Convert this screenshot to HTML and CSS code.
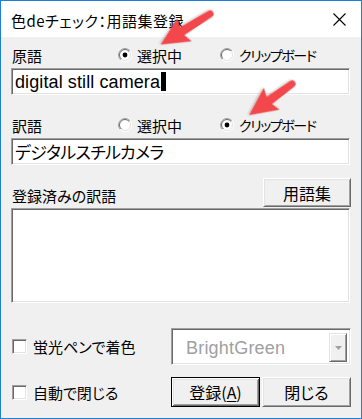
FILE: index.html
```html
<!DOCTYPE html>
<html lang="ja">
<head>
<meta charset="utf-8">
<title>色deチェック：用語集登録</title>
<link rel="stylesheet" href="styles.css">
</head>
<body>
<div class="window">
  <div class="titlebar">
    <span class="title">色deチェック：用語集登録</span>
    <svg class="close" width="13" height="13" viewBox="0 0 13 13"><path d="M0.5 0.5 L12.5 12.5 M12.5 0.5 L0.5 12.5" stroke="#000" stroke-width="1.1" fill="none"/></svg>
  </div>
  <div class="content">
    <div class="radio-row">
      <span class="label">原語</span>
      <span class="radio">
        <svg class="rb" width="14" height="14" viewBox="0 0 14 14"><defs><linearGradient id="go" x1="0" y1="0" x2="1" y2="1"><stop offset="0.5" stop-color="#a0a0a0"/><stop offset="0.5" stop-color="#ffffff"/></linearGradient><linearGradient id="gi" x1="0" y1="0" x2="1" y2="1"><stop offset="0.5" stop-color="#696969"/><stop offset="0.5" stop-color="#e3e3e3"/></linearGradient></defs><circle cx="7" cy="7" r="6.5" fill="none" stroke="url(#go)"/><circle cx="7" cy="7" r="5.5" fill="#fff" stroke="url(#gi)"/><circle cx="7" cy="7" r="2.4" fill="#000"/></svg>
        <span>選択中</span>
      </span>
      <span class="radio">
        <svg class="rb" width="14" height="14" viewBox="0 0 14 14"><circle cx="7" cy="7" r="6.5" fill="none" stroke="url(#go)"/><circle cx="7" cy="7" r="5.5" fill="#fff" stroke="url(#gi)"/></svg>
        <span class="narrow">クリップボード</span>
      </span>
    </div>
    <div class="textbox latin"><span>digital still camera</span><span class="caret"></span></div>

    <div class="radio-row row2">
      <span class="label">訳語</span>
      <span class="radio">
        <svg class="rb" width="14" height="14" viewBox="0 0 14 14"><circle cx="7" cy="7" r="6.5" fill="none" stroke="url(#go)"/><circle cx="7" cy="7" r="5.5" fill="#fff" stroke="url(#gi)"/></svg>
        <span>選択中</span>
      </span>
      <span class="radio">
        <svg class="rb" width="14" height="14" viewBox="0 0 14 14"><circle cx="7" cy="7" r="6.5" fill="none" stroke="url(#go)"/><circle cx="7" cy="7" r="5.5" fill="#fff" stroke="url(#gi)"/><circle cx="7" cy="7" r="2.4" fill="#000"/></svg>
        <span class="narrow">クリップボード</span>
      </span>
    </div>
    <div class="textbox jp">デジタルスチルカメラ</div>

    <div class="list-head">
      <span class="list-label">登録済みの訳語</span>
      <span class="btn glossary">用語集</span>
    </div>
    <div class="listbox"></div>

    <div class="opt-row row-a">
      <span class="check"><span class="box"></span><span>蛍光ペンで着色</span></span>
      <div class="combo">
        <span class="combo-text">BrightGreen</span>
        <span class="drop"><svg width="7" height="4" viewBox="0 0 7 4"><path d="M0 0 H7 L3.5 4 Z" fill="#a0a0a0"/></svg></span>
      </div>
    </div>
    <div class="opt-row row-b">
      <span class="check"><span class="box"></span><span>自動で閉じる</span></span>
      <div class="buttons">
        <span class="btn default">登録(<u>A</u>)</span>
        <span class="btn close-btn">閉じる</span>
      </div>
    </div>
  </div>

  <svg class="arrows" width="362" height="419" viewBox="0 0 362 419">
    <defs>
      <filter id="sh" x="-20%" y="-20%" width="140%" height="140%"><feDropShadow dx="1" dy="1" stdDeviation="1" flood-color="#000" flood-opacity="0.25"/></filter>
    </defs>
    <g transform="translate(210,14) rotate(148.2)" filter="url(#sh)">
      <path d="M0,-3.6 L33,-4.6 L30,-13.5 L58,0 L30,13.5 L33,4.6 L0,3.6 A3.6 3.6 0 0 1 0,-3.6 Z" fill="#f2474b"/>
    </g>
    <g transform="translate(292,84) rotate(144)" filter="url(#sh)">
      <path d="M0,-3.6 L28,-4.6 L25,-13.5 L53,0 L25,13.5 L28,4.6 L0,3.6 A3.6 3.6 0 0 1 0,-3.6 Z" fill="#f2474b"/>
    </g>
  </svg>
</div>
</body>
</html>
```

FILE: styles.css
```css
html, body {
  margin: 0;
  padding: 0;
  background: #f0f0f0;
}

.window {
  position: relative;
  width: 362px;
  height: 419px;
  box-sizing: border-box;
  border: 1px solid #1d80d6;
  background: #f0f0f0;
  display: flex;
  flex-direction: column;
  font-family: "Noto Sans CJK JP", "Noto Sans", sans-serif;
  font-size: 15px;
  line-height: 1;
  color: #000;
  font-feature-settings: "palt";
  overflow: hidden;
}

.titlebar {
  flex: none;
  height: 36px;
  background: #fff;
  display: flex;
  align-items: center;
  justify-content: space-between;
  padding: 0 15px 0 10px;
}

.title {
  font-size: 15px;
  letter-spacing: 0.5px;
  padding-top: 2px;
}

.close {
  display: block;
  margin-top: 1px;
}

.content {
  display: flex;
  flex-direction: column;
  padding: 0 11px 0 10px;
}

.radio-row {
  display: flex;
  align-items: center;
  height: 26px;
  margin-top: 5px;
}

.row2 {
  margin-top: 17px;
}

.label {
  width: 107px;
  padding-left: 1px;
  box-sizing: border-box;
}

.radio {
  display: flex;
  align-items: center;
  gap: 5px;
  width: 102px;
}

.rb {
  display: block;
  flex: none;
}

.narrow {
  font-size: 14px;
  letter-spacing: -1.4px;
}

.textbox {
  height: 27px;
  box-sizing: border-box;
  background: #fff;
  border: 1px solid;
  border-color: #a0a0a0 #fff #fff #a0a0a0;
  box-shadow: inset 1px 1px 0 #696969, inset -1px -1px 0 #e3e3e3;
  display: flex;
  align-items: center;
  padding-left: 3px;
}

.latin {
  font-family: "Liberation Sans", Arial, sans-serif;
  font-size: 18px;
  letter-spacing: 0.1px;
}

.caret {
  display: inline-block;
  width: 5px;
  height: 19px;
  background: #000;
  margin-left: 1px;
}

.jp {
  font-size: 17px;
  letter-spacing: -0.6px;
}

.list-head {
  display: flex;
  justify-content: space-between;
  align-items: center;
  margin-top: 13px;
  height: 29px;
}

.list-label {
  padding-left: 1px;
  padding-top: 5px;
}

.btn {
  box-sizing: border-box;
  display: flex;
  align-items: center;
  justify-content: center;
  background: #f0f0f0;
  border: 1px solid;
  border-color: #fff #696969 #696969 #fff;
  box-shadow: inset 1px 1px 0 #e3e3e3, inset -1px -1px 0 #a0a0a0;
  font-size: 16px;
}

.glossary {
  width: 88px;
  height: 29px;
  margin-right: -1px;
}

.listbox {
  margin-top: 1px;
  height: 95px;
  box-sizing: border-box;
  background: #fff;
  border: 1px solid;
  border-color: #a0a0a0 #fff #fff #a0a0a0;
  box-shadow: inset 1px 1px 0 #696969, inset -1px -1px 0 #e3e3e3;
}

.opt-row {
  display: grid;
  grid-template-columns: 160px 1fr;
  align-items: center;
}

.row-a {
  margin-top: 25px;
  height: 37px;
}

.row-b {
  margin-top: 12px;
  height: 30px;
}

.check {
  display: flex;
  align-items: center;
  gap: 6px;
  padding-left: 1px;
}

.box {
  width: 15px;
  height: 15px;
  box-sizing: border-box;
  background: #fff;
  border: 1px solid;
  border-color: #a0a0a0 #fff #fff #a0a0a0;
  box-shadow: inset 1px 1px 0 #696969, inset -1px -1px 0 #e3e3e3;
}

.combo {
  height: 37px;
  box-sizing: border-box;
  margin-right: -1px;
  background: #fff;
  border: 1px solid;
  border-color: #a0a0a0 #fff #fff #a0a0a0;
  box-shadow: inset 1px 1px 0 #696969, inset -1px -1px 0 #e3e3e3;
  display: flex;
  align-items: stretch;
  padding: 4px 3px 2px 14px;
}

.combo-text {
  flex: 1;
  display: flex;
  align-items: center;
  font-family: "Liberation Sans", Arial, sans-serif;
  font-size: 18px;
  color: #a0a0a0;
  letter-spacing: 0.2px;
}

.drop {
  width: 18px;
  box-sizing: border-box;
  display: flex;
  align-items: center;
  justify-content: center;
  background: #f0f0f0;
  border: 1px solid;
  border-color: #e3e3e3 #696969 #696969 #e3e3e3;
  box-shadow: inset 1px 1px 0 #fff, inset -1px -1px 0 #a0a0a0;
}

.buttons {
  display: flex;
  gap: 2px;
  height: 30px;
  margin-right: -1px;
}

.default {
  width: 89px;
  border: 1px solid #000;
  box-shadow: inset 1px 1px 0 #fff, inset -1px -1px 0 #696969, inset 2px 2px 0 #e3e3e3, inset -2px -2px 0 #a0a0a0;
}

.close-btn {
  width: 89px;
}

.default u {
  text-underline-offset: 2px;
}

.arrows {
  position: absolute;
  left: -1px;
  top: -1px;
  pointer-events: none;
}
```
